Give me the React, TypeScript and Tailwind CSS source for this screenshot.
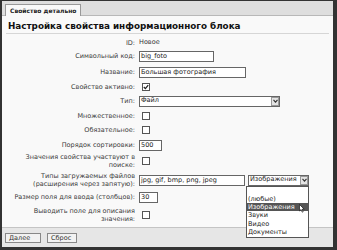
const font = { fontFamily: '"DejaVu Sans", Verdana, sans-serif' }

const Check = ({ checked = false }: { checked?: boolean }) => (
  <div className="w-[8px] h-[8px] ml-[3px] border border-[#555] bg-white flex items-center justify-center">
    {checked && (
      <svg width="6" height="6" viewBox="0 0 6 6">
        <path d="M0.8 3 L2.4 4.6 L5.2 1.2" stroke="#222" strokeWidth="1.3" fill="none" />
      </svg>
    )}
  </div>
)

const Input = ({ value, w }: { value: string; w: string }) => (
  <div className={`${w} h-[11px] border border-[#666] bg-white text-[6.5px] leading-[9px] pl-[1px] text-[#222] overflow-hidden whitespace-nowrap`}>
    {value}
  </div>
)

const Arrow = () => (
  <div className="w-[8px] h-[9px] border border-[#999] bg-[#e4e4e4] flex items-center justify-center">
    <svg width="5" height="4" viewBox="0 0 5 4">
      <path d="M0.5 0.8 L2.5 3.2 L4.5 0.8" stroke="#333" strokeWidth="1.1" fill="none" />
    </svg>
  </div>
)

const Row = ({ label, h, children }: { label: React.ReactNode; h: string; children?: React.ReactNode }) => (
  <div className={`flex items-center ${h}`}>
    <div className="w-[135px] pr-[2px] text-right text-[6.5px] leading-[8px] text-[#3a3a3a]">{label}</div>
    <div className="flex items-center gap-[3px] pl-[2px]">{children}</div>
  </div>
)

export default function App() {
  return (
    <div style={font} className="w-[337px] h-[250px] bg-[#333] pt-[1px] pl-[2px] pr-[4px] pb-[3px]">
      <div className="w-full h-full flex flex-col bg-[#f9f9f9]">
        {/* TAB STRIP */}
        <div className="h-[15px] bg-[#dedede] border-b border-[#b8b8b8] flex items-end pl-[3px]">
          <div className="h-[12px] px-[4px] bg-[#f9f9f9] border border-b-0 border-[#999] text-[6px] font-bold leading-[11px] text-[#222] -mb-[1px]">
            Свойство детально
          </div>
        </div>

        {/* CONTENT */}
        <div className="relative flex-1 flex flex-col">
          <div className="h-[18px] mx-[4px] pl-[2px] border-b border-[#d6d6d6] text-[8.8px] font-bold leading-[18px] text-[#111] pt-[1px]">
            Настройка свойства информационного блока
          </div>
          <div className="pt-[3px] flex flex-col">
            <Row label="ID:" h="h-[12px]">
              <span className="text-[6.5px] text-[#333]">Новое</span>
            </Row>
            <Row label="Символьный код:" h="h-[14px]">
              <Input value="big_foto" w="w-[75px]" />
            </Row>
            <Row label="Название:" h="h-[18px]">
              <Input value="Большая фотография" w="w-[107px]" />
            </Row>
            <Row label="Свойство активно:" h="h-[12px]">
              <Check checked />
            </Row>
            <Row label="Тип:" h="h-[16px]">
              <div className="w-[141px] h-[11px] border border-[#666] bg-white flex items-center justify-between">
                <span className="text-[6.5px] pl-[1px] text-[#222]">Файл</span>
                <Arrow />
              </div>
            </Row>
            <Row label="Множественное:" h="h-[14px]">
              <Check />
            </Row>
            <Row label="Обязательное:" h="h-[14px]">
              <Check />
            </Row>
            <Row label="Порядок сортировки:" h="h-[16px]">
              <Input value="500" w="w-[23px]" />
            </Row>
            <Row label={<>Значения свойства участвуют в<br />поиске:</>} h="h-[16px]">
              <Check />
            </Row>
            <Row label={<>Типы загружаемых файлов<br />(расширения через запятую):</>} h="h-[22px]">
              <Input value="jpg, gif, bmp, png, jpeg" w="w-[106px]" />
              <div className="w-[61px] h-[11px] border border-[#666] bg-white flex items-center justify-between">
                <span className="text-[6.5px] pl-[1px] text-[#222]">Изображения</span>
                <Arrow />
              </div>
            </Row>
            <Row label="Размер поля для ввода (столбцов):" h="h-[12px]">
              <Input value="30" w="w-[19px]" />
            </Row>
            <Row label={<>Выводить поле для описания<br />значения:</>} h="h-[24px]">
              <Check />
            </Row>
          </div>

          {/* OPEN LIST */}
          <div className="absolute left-[244px] top-[170px] w-[63px] border border-[#555] bg-white text-[6.5px] leading-[8.4px] text-[#222] z-10">
            <div className="h-[7.5px]" />
            <div className="pl-[1px]">(любые)</div>
            <div className="pl-[1px] bg-[#555] text-white relative">
              Изображения
              <svg className="absolute right-[3px] top-[1px]" width="6" height="9" viewBox="0 0 6 9">
                <path d="M0.5 0.5 L0.5 7 L2 5.6 L3.2 8.2 L4.2 7.8 L3 5.2 L5.2 5.2 Z" fill="#fff" stroke="#000" strokeWidth="0.6" />
              </svg>
            </div>
            <div className="pl-[1px]">Звуки</div>
            <div className="pl-[1px]">Видео</div>
            <div className="pl-[1px]">Документы</div>
          </div>
        </div>

        {/* FOOTER */}
        <div className="h-[20px] border-t border-[#c4c4c4] bg-[#e6e6e6] flex items-center gap-[6px] pl-[3px]">
          <div className="w-[36px] h-[10px] border border-[#888] bg-[#f2f2f2] text-[6.5px] leading-[8px] pl-[3px] text-[#333]">Далее</div>
          <div className="w-[30px] h-[10px] border border-[#888] bg-[#f2f2f2] text-[6.5px] leading-[8px] pl-[3px] text-[#333]">Сброс</div>
        </div>
      </div>
    </div>
  )
}
